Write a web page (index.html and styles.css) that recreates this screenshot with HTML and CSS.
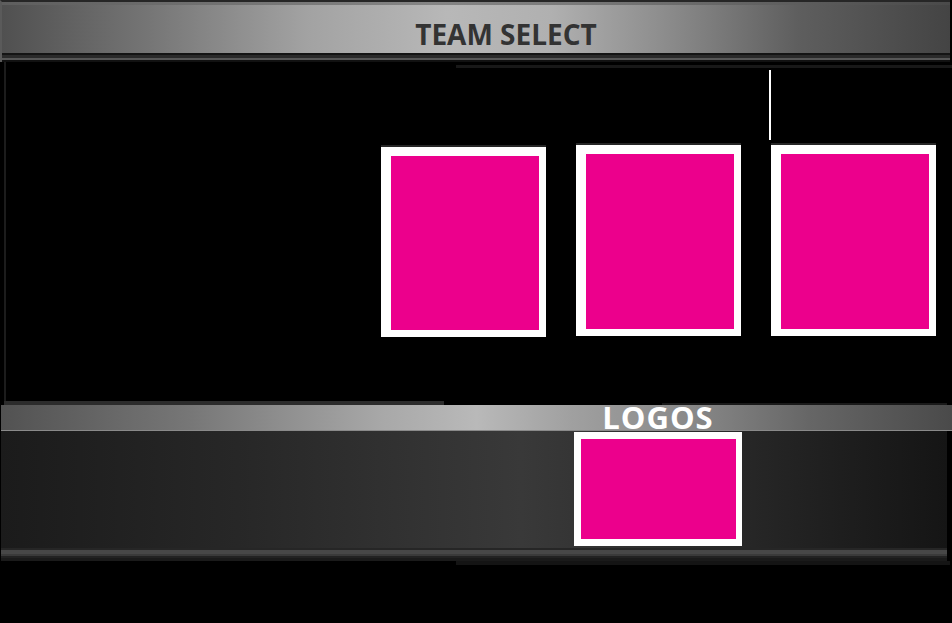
FILE: index.html
```html
<!DOCTYPE html>
<html lang="en">
<head>
  <meta charset="UTF-8" />
  <meta name="viewport" content="width=device-width, initial-scale=1.0"/>
  <title>Team Select</title>
  <link rel="stylesheet" href="styles.css">
</head>
<body>
  <header class="top-bar">
    <div class="top-bar-rim"></div>
    <div class="top-bar-face">
      <h1>TEAM SELECT</h1>
    </div>
    <div class="top-bar-base"></div>
  </header>

  <main class="stage">
    <div class="stage-divider"></div>
    <div class="card-row">
      <div class="team-card team-card-low"></div>
      <div class="team-card"></div>
      <div class="team-card"></div>
    </div>
  </main>

  <section class="logo-panel">
    <div class="logo-lip"></div>
    <div class="logo-bar">
      <h2>LOGOS</h2>
    </div>
    <div class="logo-body">
      <div class="logo-card"></div>
    </div>
    <div class="logo-base"></div>
    <div class="logo-shadow"></div>
  </section>
</body>
</html>
```

FILE: styles.css
```css
:root {
  --pink: #ec008c;
  --black: #000;
}

* {
  margin: 0;
  padding: 0;
  box-sizing: border-box;
  font-family: 'Open Sans', 'Liberation Sans', sans-serif;
}

body {
  background-color: var(--black);
  width: 952px;
  height: 623px;
  overflow: hidden;
}

/* header bar */
.top-bar {
  width: 950px;
  border-top: 2px solid #262626;
  border-left: 2px solid #5a5a5a;
}

.top-bar-rim {
  height: 3px;
  background: linear-gradient(90deg, #5e5e5e 0%, #858585 45%, #7a7a7a 60%, #4a4a4a 100%);
}

.top-bar-face {
  height: 48px;
  padding: 11px 0 0 60px;
  display: flex;
  justify-content: center;
  background: linear-gradient(90deg, #505050 0%, #747474 15%, #a2a2a2 32%, #b8b8b8 47%, #b0b0b0 58%, #8c8c8c 70%, #5e5e5e 84%, #444 100%);
}

.top-bar-face h1 {
  font-size: 28px;
  line-height: 37px;
  font-weight: 700;
  color: #333;
}

.top-bar-base {
  height: 9px;
  background: linear-gradient(#141414 0 2px, #2a2a2a 2px 5px, #575757 5px 7px, #111 7px 9px);
}

/* team cards */
.stage {
  height: 339px;
  margin-left: 4px;
  padding-top: 8px;
  border-left: 2px solid #1c1c1c;
  background: linear-gradient(#181818, #181818) no-repeat 450px 3px / 496px 3px;
}

.stage-divider {
  width: 2px;
  height: 70px;
  margin-left: 763px;
  margin-bottom: 5px;
  background: #fff;
}

.card-row {
  display: flex;
  align-items: flex-start;
  gap: 30px;
  margin-left: 375px;
}

.team-card {
  width: 165px;
  height: 191px;
  border: solid #fff;
  border-width: 9px 7px 7px 10px;
  background: var(--pink);
  box-shadow: 0 -2px 0 #262626;
}

.team-card-low {
  height: 190px;
  margin-top: 2px;
}

/* logos panel */
.logo-lip {
  height: 4px;
  background:
    linear-gradient(#2c2c2c, #2c2c2c) no-repeat 4px 0 / 440px 4px,
    linear-gradient(#1a1a1a, #1a1a1a) no-repeat 662px 2px / 285px 2px;
}

.logo-bar {
  height: 26px;
  margin-left: 1px;
  padding-left: 573px;
  border-bottom: 1px solid #8a8a8a;
  background: linear-gradient(90deg, #525252 0%, #777 20%, #a8a8a8 40%, #b9b9b9 50%, #a0a0a0 60%, #8a8a8a 72%, #666 85%, #4a4a4a 100%);
}

.logo-bar h2 {
  width: 168px;
  text-align: center;
  font-size: 31px;
  line-height: 24px;
  font-weight: 700;
  letter-spacing: 1px;
  color: #fff;
}

.logo-body {
  width: 946px;
  height: 117px;
  margin-left: 1px;
  padding: 1px 0 0 573px;
  background: linear-gradient(90deg, #1b1b1b 0%, #272727 25%, #333 45%, #393939 55%, #2a2a2a 75%, #1d1d1d 90%, #151515 100%);
}

.logo-card {
  width: 168px;
  height: 114px;
  border: solid #fff;
  border-width: 7px 6px 7px 7px;
  background: var(--pink);
}

.logo-base {
  width: 946px;
  height: 13px;
  margin-left: 1px;
  background: linear-gradient(#262626 0 2px, #474747 2px 6px, #3a3a3a 6px 8px, #222 8px 10px, #1a1a1a 10px 13px);
}

.logo-shadow {
  width: 494px;
  height: 4px;
  margin-left: 456px;
  background: #141414;
}
```
